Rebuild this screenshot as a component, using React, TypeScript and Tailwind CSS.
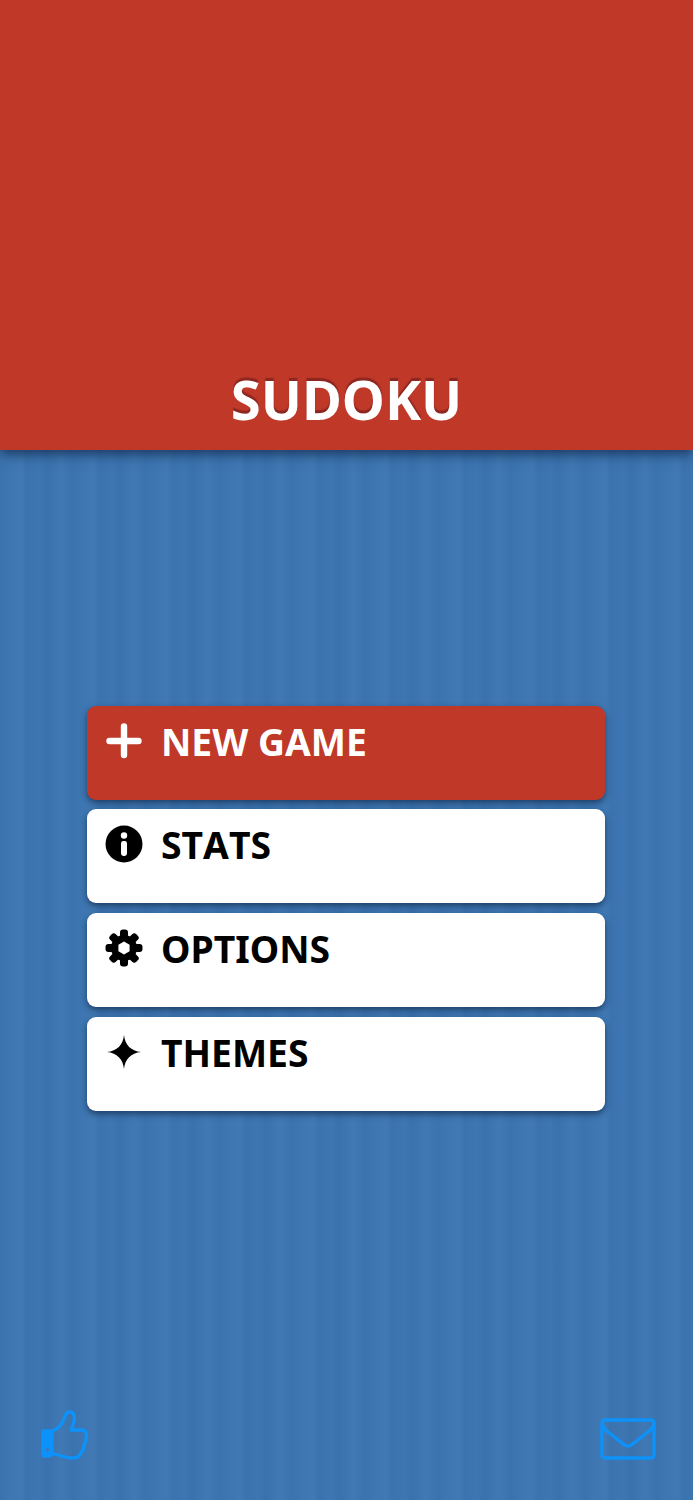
function PlusIcon() {
  return (
    <svg viewBox="0 0 36 36" className="w-[36px] h-[36px]" fill="none" stroke="currentColor" strokeWidth="6.400" strokeLinecap="round">
      <path d="M18 3.500 V32 M3.500 18 H32.500" />
    </svg>
  );
}

function InfoIcon() {
  return (
    <svg viewBox="0 0 38 38" className="w-[38px] h-[38px]">
      <circle cx="19" cy="19" r="18.500" fill="currentColor" />
      <circle cx="19" cy="10.500" r="3.200" fill="#fff" />
      <rect x="16" y="16" width="6" height="15" rx="2.400" fill="#fff" />
    </svg>
  );
}

function GearIcon() {
  const teeth = [0, 45, 90, 135];
  return (
    <svg viewBox="0 0 38 38" className="w-[38px] h-[38px]" fill="currentColor">
      {teeth.map((deg) => (
        <rect key={deg} x="15" y="0.500" width="8" height="37" rx="3" transform={`rotate(${deg} 19 19)`} />
      ))}
      <circle cx="19" cy="19" r="13" />
      <path d="M19 12.500 L24.600 15.750 V22.250 L19 25.500 L13.400 22.250 V15.750 Z" fill="#fff" />
    </svg>
  );
}

function Sparkle() {
  return (
    <svg viewBox="0 0 34 34" className="w-[34px] h-[34px]" fill="currentColor">
      <path d="M17 0 C18 10 24 16 34 17 C24 18 18 24 17 34 C16 24 10 18 0 17 C10 16 16 10 17 0 Z" />
    </svg>
  );
}

function ThumbIcon() {
  return (
    <svg viewBox="0 0 48 50" className="w-[48px] h-[50px]" fill="none" stroke="#0d92fa" strokeWidth="3.400" strokeLinejoin="round" strokeLinecap="round">
      <path d="M11 21 C17 19 21 15 23 9 C24 5 26 2 29 2 C33 2 34 7 33 11 C32.500 14 31 17 30 20 L40 20 C45 20 46.500 24 45 27 C45.500 30 44.500 33 43 35 C43 38 42 41 40 42.500 C39 46 37 48 32 48 C25 48 20 46 11 43" />
      <path d="M2 21 H11 V43 C11 45 9 46 7 46 H4 C2.500 46 2 45 2 44 Z" fill="#0d92fa" />
      <circle cx="6.500" cy="40" r="1.700" fill="#3f78b4" stroke="none" />
    </svg>
  );
}

function MailIcon() {
  return (
    <svg viewBox="0 0 56 42" className="w-[56px] h-[42px]" fill="none" stroke="#0d92fa" strokeWidth="3.400" strokeLinejoin="round" strokeLinecap="round">
      <rect x="2" y="2" width="52" height="38" rx="3" />
      <path d="M3 8 C4 11 5 12 8 14 L24 26.500 C26.500 28.500 29.500 28.500 32 26.500 L48 14 C51 12 52 11 53 8" />
    </svg>
  );
}

function MenuButton({ label, icon, primary }: { label: string; icon: React.ReactNode; primary?: boolean }) {
  return (
    <button
      className={`h-[94px] w-full rounded-[9px] flex items-start pl-[18px] pt-[13px] shadow-[0_3px_6px_rgba(20,45,80,0.75)] ${
        primary ? "bg-[#bf3828] text-white" : "bg-white text-black"
      }`}
    >
      <span className="w-[38px] h-[46px] flex items-center justify-center -mt-[1px]">{icon}</span>
      <span className="ml-[18px] text-[37.300px] leading-[46px] font-bold [font-kerning:none]">{label}</span>
    </button>
  );
}

export default function App() {
  return (
    <div className="relative w-[693px] h-[1500px] overflow-hidden flex flex-col font-['Noto_Sans',sans-serif] bg-[#3d76b2] bg-[repeating-linear-gradient(90deg,rgba(20,60,110,0.05)_0px,rgba(20,60,110,0)_9px,rgba(255,255,255,0.025)_21px,rgba(20,60,110,0.05)_27px,rgba(20,60,110,0)_39px,rgba(20,60,110,0.07)_47px,rgba(255,255,255,0.02)_61px,rgba(20,60,110,0.05)_73px)]">
      {/* Header */}
      <header className="h-[450px] shrink-0 bg-[#bf3828] flex items-end justify-center pb-[15px] shadow-[0_4px_12px_rgba(20,45,80,0.85)]">
        <h1 className="text-[54.500px] leading-[71px] font-bold text-white [font-kerning:none] [text-shadow:0_-3px_1px_rgba(130,35,30,0.85)]">SUDOKU</h1>
      </header>

      {/* Menu */}
      <div className="flex flex-col gap-[9.8px] w-[518px] ml-[87px] mt-[255.600px]">
        <MenuButton primary label="NEW GAME" icon={<PlusIcon />} />
        <MenuButton label="STATS" icon={<InfoIcon />} />
        <MenuButton label="OPTIONS" icon={<GearIcon />} />
        <MenuButton label="THEMES" icon={<Sparkle />} />
      </div>

      {/* Footer icons */}
      <div className="mt-auto flex items-end justify-between pl-[41px] pr-[37px] pb-[40px]">
        <ThumbIcon />
        <MailIcon />
      </div>
    </div>
  );
}
